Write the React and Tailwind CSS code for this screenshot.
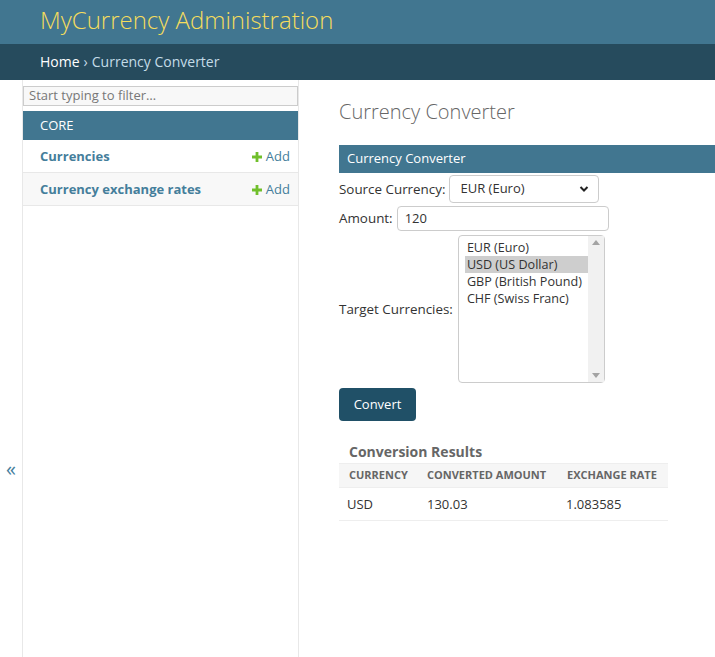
import React from "react";

const targets = [
  { code: "EUR (Euro)" },
  { code: "USD (US Dollar)", selected: true },
  { code: "GBP (British Pound)" },
  { code: "CHF (Swiss Franc)" },
];

function PlusIcon() {
  return (
    <svg width="10" height="10" viewBox="0 0 10 10" className="mr-[4px]">
      <path d="M3.6 0h2.8v3.6H10v2.8H6.4V10H3.6V6.4H0V3.6h3.6z" fill="#70bf2b" />
    </svg>
  );
}

function ModelRow({ name, striped }) {
  return (
    <div
      className={`flex h-[33px] items-center justify-between border-b border-[#e8e8e8] pt-[1px] pl-[17px] pr-[8px] ${
        striped ? "bg-[#f8f8f8]" : "bg-white"
      }`}
    >
      <span className="text-[13px] font-bold text-[#447e9b]">{name}</span>
      <span className="flex items-center text-[13px] text-[#447e9b]">
        <PlusIcon />
        Add
      </span>
    </div>
  );
}

export default function App() {
  return (
    <div className="min-h-screen bg-white font-['Open_Sans',sans-serif] text-[#333]">
      {/* header */}
      <div className="flex h-[44px] items-center bg-[#417690] px-[40px] pb-[4px]">
        <h1 className="text-[24px] font-light text-[#f5dd5d]">MyCurrency Administration</h1>
      </div>
      <div className="flex h-[36px] items-center bg-[#264b5d] px-[40px] pb-[1px] text-[14px] text-[#c4dce8]">
        <span className="text-white">Home</span>
        <span className="mx-[4px]">›</span>
        <span>Currency Converter</span>
      </div>

      <div className="flex min-h-[577px]">
        {/* toggle column */}
        <div className="w-[23px] shrink-0 border-r border-[#e8e8e8] pt-[377px] text-center text-[20px] leading-[24px] text-[#447e9b]">
          «
        </div>

        {/* sidebar */}
        <div className="w-[276px] shrink-0 border-r border-[#e8e8e8]">
          <div className="mt-[6px] flex h-[20px] items-center border border-[#ccc] bg-[#f8f8f8] px-[5px] text-[13px] text-[#777]">
            Start typing to filter…
          </div>
          <div className="mt-[5px] flex h-[29px] items-center bg-[#417690] px-[17px] text-[13px] text-white">
            CORE
          </div>
          <ModelRow name="Currencies" />
          <ModelRow name="Currency exchange rates" striped />
        </div>

        {/* content */}
        <div className="min-w-0 flex-1 pl-[40px] pt-[20px]">
          <h1 className="mb-[21px] text-[20px] font-light leading-[24px] text-[#666]">Currency Converter</h1>

          <div className="mt-[1px] flex h-[28px] items-center bg-[#417690] px-[8px] text-[13px] text-white">
            Currency Converter
          </div>

          <div className="mt-[2px] flex items-center text-[13.4px]">
            <span className="mr-[4px]">Source Currency:</span>
            <div className="flex h-[28px] w-[150px] items-center justify-between rounded-[4px] border border-[#ccc] pl-[10px] pr-[9px] text-[13px]">
              <span>EUR (Euro)</span>
              <svg width="10" height="8" viewBox="0 0 10 8">
                <path d="M1.5 2l3.5 3.5L8.5 2" fill="none" stroke="#222" strokeWidth="2" />
              </svg>
            </div>
          </div>

          <div className="mt-[3px] flex items-center text-[13.4px]">
            <span className="mr-[4px]">Amount:</span>
            <div className="flex h-[25px] w-[212px] items-center rounded-[4px] border border-[#ccc] px-[7px] text-[13px]">
              120
            </div>
          </div>

          <div className="mt-[4px] flex items-center text-[13.4px]">
            <span className="mr-[5px]">Target Currencies:</span>
            <div className="flex h-[148px] w-[147px] rounded-[4px] border border-[#ccc] text-[12.6px]">
              <div className="flex-1 pl-[6px] pt-[3px]">
                {targets.map((t) => (
                  <div
                    key={t.code}
                    className={`h-[17px] pl-[2px] leading-[17px] ${t.selected ? "bg-[#cecece]" : ""}`}
                  >
                    {t.code}
                  </div>
                ))}
              </div>
              <div className="flex w-[16px] flex-col items-center justify-between bg-[#f1f1f1] py-[4px]">
                <svg width="8" height="5" viewBox="0 0 8 5">
                  <path d="M0 5L4 0l4 5z" fill="#a3a3a3" />
                </svg>
                <svg width="8" height="5" viewBox="0 0 8 5">
                  <path d="M0 0h8L4 5z" fill="#a3a3a3" />
                </svg>
              </div>
            </div>
          </div>

          <button className="mt-[5px] h-[33px] w-[77px] rounded-[4px] bg-[#205067] text-[13px] text-white">
            Convert
          </button>

          <div className="mt-[22px] w-[329px]">
            <div className="pb-[2px] pl-[10px] text-[14px] font-bold leading-[18px] text-[#666]">Conversion Results</div>
            <div className="grid h-[25px] grid-cols-[78px_140px_111px] items-center border-y border-[#eee] bg-[#f6f6f6] text-[11px] font-bold uppercase text-[#666]">
              <span className="pl-[10px]">Currency</span>
              <span className="pl-[10px]">Converted Amount</span>
              <span className="pl-[10px]">Exchange Rate</span>
            </div>
            <div className="grid h-[33px] grid-cols-[78px_140px_111px] items-center border-b border-[#eee] pt-[1px] text-[13px]">
              <span className="pl-[8px]">USD</span>
              <span className="pl-[10px]">130.03</span>
              <span className="pl-[9px]">1.083585</span>
            </div>
          </div>
        </div>
      </div>
    </div>
  );
}
